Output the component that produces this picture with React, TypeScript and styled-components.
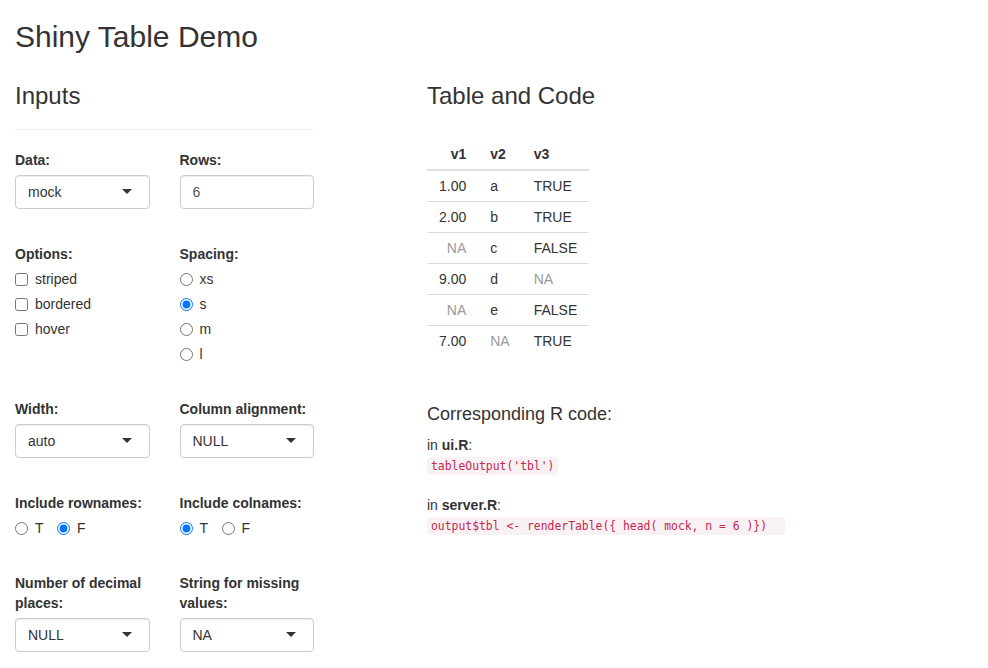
import styled, {createGlobalStyle} from 'styled-components';

const GlobalStyle = createGlobalStyle`
   body {
      margin: 0;
      background: #fff;
      color: #333;
      font-family: 'Liberation Sans', Arial, sans-serif;
      font-size: 14px;
      line-height: 20px;
   }
`;

type Cell = {value: string; missing?: boolean};

const rows: Cell[][] = [
   [{value: '1.00'}, {value: 'a'}, {value: 'TRUE'}],
   [{value: '2.00'}, {value: 'b'}, {value: 'TRUE'}],
   [{value: 'NA', missing: true}, {value: 'c'}, {value: 'FALSE'}],
   [{value: '9.00'}, {value: 'd'}, {value: 'NA', missing: true}],
   [{value: 'NA', missing: true}, {value: 'e'}, {value: 'FALSE'}],
   [{value: '7.00'}, {value: 'NA', missing: true}, {value: 'TRUE'}],
];

const noop = () => {};

function Options({name, items, checked, type, inline}: {
   name: string;
   items: string[];
   checked?: string;
   type: 'radio' | 'checkbox';
   inline?: boolean;
}) {
   return (
      <OptionList $inline={inline}>
         {items.map((item) => (
            <OptionItem key={item}>
               <input type={type} name={name} checked={item === checked} onChange={noop} />
               {item}
            </OptionItem>
         ))}
      </OptionList>
   );
}

export default function App() {
   return (
      <Page>
         <GlobalStyle />
         <Title>Shiny Table Demo</Title>
         <Columns>
            <Sidebar>
               <SectionTitle>Inputs</SectionTitle>
               <Divider />

               <FieldRow>
                  <Field>
                     <FieldLabel>Data:</FieldLabel>
                     <SelectBox>mock</SelectBox>
                  </Field>
                  <Field>
                     <FieldLabel>Rows:</FieldLabel>
                     <NumberInput type='text' value='6' readOnly />
                  </Field>
               </FieldRow>

               <FieldRow>
                  <Field>
                     <FieldLabel>Options:</FieldLabel>
                     <Options name='opts' type='checkbox' items={['striped', 'bordered', 'hover']} />
                  </Field>
                  <Field>
                     <FieldLabel>Spacing:</FieldLabel>
                     <Options name='spacing' type='radio' items={['xs', 's', 'm', 'l']} checked='s' />
                  </Field>
               </FieldRow>

               <FieldRow>
                  <Field>
                     <FieldLabel>Width:</FieldLabel>
                     <SelectBox>auto</SelectBox>
                  </Field>
                  <Field>
                     <FieldLabel>Column alignment:</FieldLabel>
                     <SelectBox>NULL</SelectBox>
                  </Field>
               </FieldRow>

               <FieldRow>
                  <Field>
                     <FieldLabel>Include rownames:</FieldLabel>
                     <Options name='rownames' type='radio' items={['T', 'F']} checked='F' inline />
                  </Field>
                  <Field>
                     <FieldLabel>Include colnames:</FieldLabel>
                     <Options name='colnames' type='radio' items={['T', 'F']} checked='T' inline />
                  </Field>
               </FieldRow>

               <FieldRow>
                  <Field>
                     <FieldLabel>Number of decimal places:</FieldLabel>
                     <SelectBox>NULL</SelectBox>
                  </Field>
                  <Field>
                     <FieldLabel>String for missing values:</FieldLabel>
                     <SelectBox>NA</SelectBox>
                  </Field>
               </FieldRow>
            </Sidebar>

            <Main>
               <SectionTitle>Table and Code</SectionTitle>
               <DataTable>
                  <thead>
                     <tr>
                        <Th $right>v1</Th>
                        <Th>v2</Th>
                        <Th>v3</Th>
                     </tr>
                  </thead>
                  <tbody>
                     {rows.map((row, i) => (
                        <tr key={i}>
                           {row.map((cell, j) => (
                              <Td key={j} $right={j === 0} $missing={cell.missing}>
                                 {cell.value}
                              </Td>
                           ))}
                        </tr>
                     ))}
                  </tbody>
               </DataTable>

               <SubTitle>Corresponding R code:</SubTitle>
               <CodeNote>
                  in <strong>ui.R</strong>:
                  <br />
                  <Code>tableOutput('tbl')</Code>
               </CodeNote>
               <CodeNote>
                  in <strong>server.R</strong>:
                  <br />
                  <Code>{'output$tbl <- renderTable({ head( mock, n = 6 )})  '}</Code>
               </CodeNote>
            </Main>
         </Columns>
      </Page>
   );
}

const Page = styled.div`
   padding: 0 15px;
`;

const Title = styled.h2`
   margin: 20px 0 10px;
   font-size: 30px;
   line-height: 33px;
   font-weight: normal;
`;

const Columns = styled.div`
   display: flex;
   align-items: flex-start;
`;

const Sidebar = styled.div`
   flex: 0 0 299px;
`;

const Main = styled.div`
   margin-left: 113px;
`;

const SectionTitle = styled.h3`
   margin: 20px 0 10px;
   font-size: 24px;
   line-height: 26.4px;
   font-weight: normal;
`;

const Divider = styled.hr`
   margin: 20px 0;
   border: 0;
   border-top: 1px solid #eee;
`;

const FieldRow = styled.div`
   display: grid;
   grid-template-columns: 134.5px 134.5px;
   column-gap: 30px;
   margin-bottom: 35px;
`;

const Field = styled.div`
   display: flex;
   flex-direction: column;
`;

const FieldLabel = styled.label`
   margin-bottom: 5px;
   font-weight: bold;
`;

const SelectBox = styled.div`
   position: relative;
   box-sizing: border-box;
   height: 34px;
   padding: 6px 12px;
   border: 1px solid #ccc;
   border-radius: 4px;
   box-shadow: inset 0 1px 1px rgba(0, 0, 0, 0.075);
   color: #333;

   &:after {
      content: '';
      position: absolute;
      top: 50%;
      right: 17px;
      margin-top: -3px;
      border-style: solid;
      border-width: 5px 5px 0 5px;
      border-color: #333 transparent transparent transparent;
   }
`;

const NumberInput = styled.input`
   box-sizing: border-box;
   width: 100%;
   height: 34px;
   margin: 0;
   padding: 6px 12px;
   border: 1px solid #ccc;
   border-radius: 4px;
   box-shadow: inset 0 1px 1px rgba(0, 0, 0, 0.075);
   color: #555;
   font: inherit;
   outline: none;
`;

const OptionList = styled.div<{$inline?: boolean}>`
   display: flex;
   flex-direction: ${(p) => (p.$inline ? 'row' : 'column')};
   gap: ${(p) => (p.$inline ? '13.5px' : '5px')};
`;

const OptionItem = styled.label`
   display: flex;
   align-items: center;
   height: 20px;
   cursor: pointer;

   input {
      width: 13px;
      height: 13px;
      margin: 0 7px 0 0;
   }
`;

const DataTable = styled.table`
   margin: 30px 0 20px;
   border-collapse: collapse;
   border-spacing: 0;
`;

const Th = styled.th<{$right?: boolean}>`
   padding: 5px 12px;
   border-bottom: 2px solid #ddd;
   text-align: ${(p) => (p.$right ? 'right' : 'left')};
   font-weight: bold;
`;

const Td = styled.td<{$right?: boolean; $missing?: boolean}>`
   padding: 5px 12px;
   border-top: 1px solid #ddd;
   text-align: ${(p) => (p.$right ? 'right' : 'left')};
   color: ${(p) => (p.$missing ? '#999' : '#333')};
`;

const SubTitle = styled.h4`
   margin: 49px 0 10px;
   font-size: 18px;
   line-height: 19.8px;
   font-weight: normal;
`;

const CodeNote = styled.p`
   margin: 0 0 19px;
`;

const Code = styled.code`
   padding: 2px 4px;
   border-radius: 4px;
   background: #f9f2f4;
   color: #c7254e;
   font-family: 'DejaVu Sans Mono', 'Liberation Mono', monospace;
   font-size: 11.4px;
   white-space: pre;
`;
